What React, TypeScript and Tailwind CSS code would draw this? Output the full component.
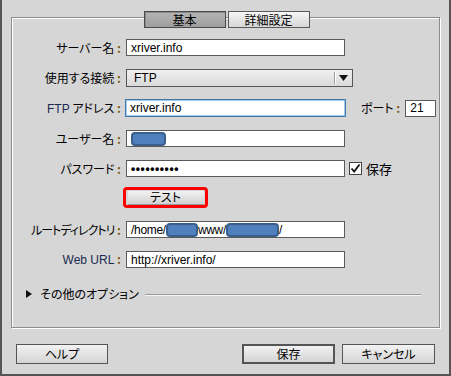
import type { ReactNode } from 'react'

const jp = '[font-family:"Noto_Sans_CJK_JP","Noto_Sans",sans-serif] [font-feature-settings:"palt"]'

function Label({ children }: { children: ReactNode }) {
  return (
    <div
      className={`w-[109px] shrink-0 text-right text-[12px] leading-none text-black whitespace-nowrap ${jp}`}
    >
      {children}
      <span className="text-[#7a5a10] font-bold"> :</span>
    </div>
  )
}

function TextBox({
  children,
  width = 'w-[219px]',
  focused = false,
}: {
  children?: ReactNode
  width?: string
  focused?: boolean
}) {
  return (
    <div
      className={`${width} ${focused ? 'h-[18px]' : 'h-[17px]'} shrink-0 bg-white border flex items-center pl-[4px] text-[12px] leading-none text-black overflow-hidden whitespace-nowrap [font-family:"Liberation_Sans",sans-serif] ${
        focused ? 'border-[#3b78b0] shadow-[inset_0_0_0_1px_#a8c8e4]' : 'border-[#5a5a5a]'
      }`}
    >
      {children}
    </div>
  )
}

function Blob({ width }: { width: string }) {
  return (
    <span
      className={`inline-block shrink-0 ${width} h-[14px] rounded-[4px] bg-[#4f80bd] border-2 border-[#3b5f8c]`}
    />
  )
}

function Button({
  children,
  primary = false,
  width = 'w-[92px]',
}: {
  children: ReactNode
  primary?: boolean
  width?: string
}) {
  return (
    <div
      className={`${width} h-[20px] flex items-center justify-center bg-gradient-to-b from-[#f2f2f2] to-[#d4d4d4] text-[12px] leading-none text-black ${jp} ${
        primary ? 'border-2 border-[#555]' : 'border border-[#555]'
      }`}
    >
      {children}
    </div>
  )
}

export default function App() {
  return (
    <div className="w-[451px] h-[376px] bg-[#d6d6d6] border-l-2 border-r-2 border-b-2 border-[#555] flex flex-col">
      {/* group box */}
      <div className="ml-[9px] mt-[17px] w-[429px] h-[311px] border border-[#8c8c8c] shadow-[inset_1px_1px_0_#fff,1px_1px_0_#fff] flex flex-col">
        {/* tabs */}
        <div className="-mt-[7px] h-[17px] flex justify-center gap-[2px] pl-[2px]">
          <div
            className={`w-[82px] h-[17px] border border-[#4a4a4a] bg-gradient-to-b from-[#b4b4b4] to-[#9e9e9e] shadow-[inset_1px_1px_0_#8a8a8a] flex items-center justify-center text-[12px] leading-none text-black ${jp}`}
          >
            基本
          </div>
          <div
            className={`w-[82px] h-[17px] border border-[#5a5a5a] bg-gradient-to-b from-[#f6f6f6] to-[#d6d6d6] flex items-center justify-center text-[12px] leading-none text-black ${jp}`}
          >
            詳細設定
          </div>
        </div>

        {/* server name */}
        <div className="mt-[11px] h-[17px] flex items-center gap-[5px]">
          <Label>サーバー名</Label>
          <TextBox>xriver.info</TextBox>
        </div>

        {/* connection */}
        <div className="mt-[13px] h-[18px] flex items-center gap-[5px]">
          <Label>使用する接続</Label>
          <div className="w-[227px] h-[18px] border border-[#555] bg-gradient-to-b from-[#f0f0f0] to-[#dadada] flex items-center">
            <span className="flex-1 pl-[7px] text-[12px] leading-none text-black [font-family:'Liberation_Sans',sans-serif]">
              FTP
            </span>
            <span className="w-px h-[12px] bg-[#9a9a9a] shadow-[1px_0_0_#fff]" />
            <span className="w-[17px] flex justify-center">
              <svg width="9" height="6" viewBox="0 0 9 6">
                <path d="M0 0 H9 L4.5 6 Z" fill="#111" />
              </svg>
            </span>
          </div>
        </div>

        {/* ftp address */}
        <div className="mt-[12px] h-[18px] flex items-center gap-[4px]">
          <Label>
            <span className="text-[#1a2a50] [font-family:'Liberation_Sans',sans-serif]">FTP</span> アドレス
          </Label>
          <TextBox width="w-[221px]" focused>
            xriver.info
          </TextBox>
          <div className={`ml-[11px] text-[12px] leading-none text-black whitespace-nowrap ${jp}`}>
            ポート<span className="text-[#7a5a10] font-bold"> :</span>
          </div>
          <div className="ml-[1px]">
            <TextBox width="w-[31px]">21</TextBox>
          </div>
        </div>

        {/* user */}
        <div className="mt-[13px] h-[17px] flex items-center gap-[5px]">
          <Label>ユーザー名</Label>
          <TextBox>
            <Blob width="w-[35px]" />
          </TextBox>
        </div>

        {/* password */}
        <div className="mt-[13px] h-[17px] flex items-center gap-[5px]">
          <Label>パスワード</Label>
          <TextBox>
            <span className="text-[12px] tracking-[0.6px] font-bold">••••••••••</span>
          </TextBox>
          <div className="ml-[-1px] w-[13px] h-[13px] bg-white border border-[#444] flex items-center justify-center">
            <svg width="11" height="11" viewBox="0 0 11 11">
              <path d="M1.5 5.5 L4.2 8.5 L9.5 1.5" fill="none" stroke="#111" strokeWidth="1.8" />
            </svg>
          </div>
          <span className={`-ml-[1px] text-[13px] leading-none text-black ${jp}`}>保存</span>
        </div>

        {/* test button */}
        <div className="mt-[10px] h-[21px] flex">
          <div className="ml-[111px] w-[85px] h-[21px] border-[3px] border-[#ff0000] rounded-[4px] flex items-center justify-center">
            <div
              className={`w-[76px] h-[14px] bg-gradient-to-b from-[#f2f2f2] to-[#d2d2d2] border-b border-[#999] flex items-center justify-center text-[12px] leading-none text-black ${jp}`}
            >
              テスト
            </div>
          </div>
        </div>

        {/* root dir */}
        <div className="mt-[13px] h-[17px] flex items-center gap-[5px]">
          <Label>
            <span className="tracking-[-1px]">ルートディレクトリ</span>
          </Label>
          <TextBox>
            <span className="tracking-[-0.3px]">/home/</span>
            <Blob width="w-[32px]" />
            <span className="tracking-[-0.3px]">www/</span>
            <Blob width="w-[53px]" />
            <span>/</span>
          </TextBox>
        </div>

        {/* web url */}
        <div className="mt-[13px] h-[17px] flex items-center gap-[5px]">
          <Label>
            <span className="text-[#1a2a50] [font-family:'Liberation_Sans',sans-serif]">Web URL</span>
          </Label>
          <TextBox>http://xriver.info/</TextBox>
        </div>

        {/* other options */}
        <div className="mt-[19px] h-[14px] flex items-center pl-[14px] pr-[18px]">
          <svg width="6" height="8" viewBox="0 0 6 8">
            <path d="M0 0 L6 4 L0 8 Z" fill="#111" />
          </svg>
          <span className={`ml-[8px] text-[12px] leading-none text-black whitespace-nowrap ${jp}`}>
            その他のオプション
          </span>
          <span className="ml-[6px] flex-1 h-px bg-[#9a9a9a] shadow-[0_1px_0_#f4f4f4]" />
        </div>
      </div>

      {/* bottom buttons */}
      <div className="mt-[16px] flex items-center pl-[14px]">
        <Button>ヘルプ</Button>
        <div className="ml-[134px]">
          <Button primary width="w-[93px]">
            保存
          </Button>
        </div>
        <div className="ml-[7px]">
          <Button width="w-[93px]">キャンセル</Button>
        </div>
      </div>
    </div>
  )
}
